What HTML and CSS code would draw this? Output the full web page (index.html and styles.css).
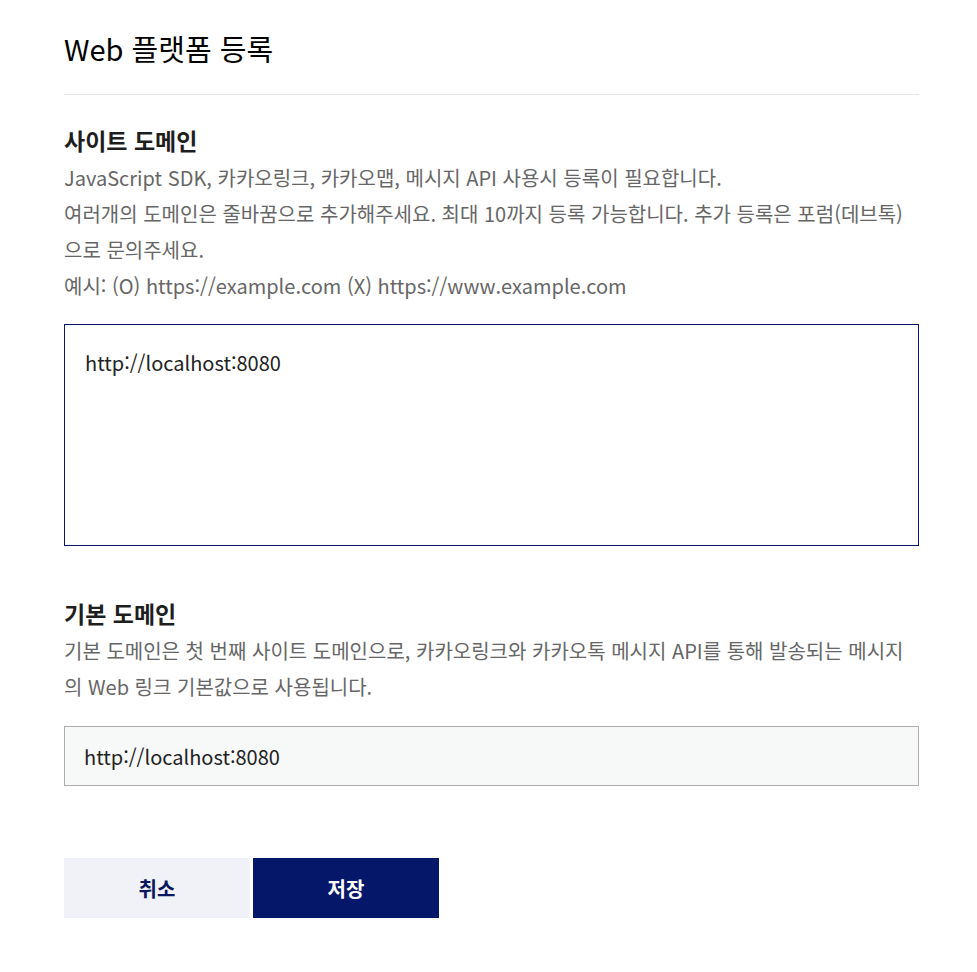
FILE: index.html
```html
<!DOCTYPE html>
<html lang="ko">
<head>
<meta charset="utf-8">
<title>Web 플랫폼 등록</title>
<link rel="stylesheet" href="styles.css">
</head>
<body>
<div class="page">
  <header class="page-header">
    <h1 class="page-title">Web 플랫폼 등록</h1>
  </header>

  <section class="field field-site">
    <h2 class="field-title">사이트 도메인</h2>
    <p class="field-desc">JavaScript SDK, 카카오링크, 카카오맵, 메시지 API 사용시 등록이 필요합니다.<br>여러개의 도메인은 줄바꿈으로 추가해주세요. 최대 10까지 등록 가능합니다. 추가 등록은 포럼(데브톡)으로 문의주세요.<br>예시: (O) https://example.com (X) https://www.example.com</p>
    <textarea class="domain-area" autofocus>http://localhost:8080</textarea>
  </section>

  <section class="field field-default">
    <h2 class="field-title">기본 도메인</h2>
    <p class="field-desc">기본 도메인은 첫 번째 사이트 도메인으로, 카카오링크와 카카오톡 메시지 API를 통해 발송되는 메시지의 Web 링크 기본값으로 사용됩니다.</p>
    <div class="domain-input">http://localhost:8080</div>
  </section>

  <div class="actions">
    <button class="btn btn-cancel" type="button">취소</button>
    <button class="btn btn-save" type="button">저장</button>
  </div>
</div>
</body>
</html>
```

FILE: styles.css
```css
* { box-sizing: border-box; }
html, body {
  margin: 0;
  padding: 0;
  background: #fff;
}
body {
  font-family: "Noto Sans CJK KR", "Noto Sans", sans-serif;
  color: #222;
}
.page {
  width: 855px;
  margin-left: 64px;
  padding-top: 28px;
}
.page-header {
  border-bottom: 1px solid #e6e6e6;
  padding-bottom: 26px;
}
.page-title {
  margin: 0;
  font-size: 29px;
  line-height: 40px;
  font-weight: 400;
  color: #000;
}
.field-site { margin-top: 30px; }
.field-default { margin-top: 52px; }
.field-title {
  margin: 0;
  font-size: 23px;
  line-height: 30px;
  font-weight: 700;
  color: #1e1e1e;
}
.field-desc {
  margin: 5px 0 0;
  font-size: 20px;
  line-height: 36px;
  color: #666;
}
.domain-area {
  display: block;
  width: 100%;
  height: 222px;
  margin-top: 20px;
  padding: 21px 20px;
  border: 1px solid #0a186b;
  border-radius: 0;
  outline: none;
  resize: none;
  font-family: inherit;
  font-size: 20px;
  line-height: 34px;
  color: #222;
  background: #fff;
  caret-color: #111;
}
.domain-input {
  margin-top: 21px;
  height: 60px;
  border: 1px solid #ababab;
  background: #f7f8f8;
  padding: 0 19px;
  display: flex;
  align-items: center;
  font-size: 20px;
  color: #222;
}
.actions {
  margin-top: 72px;
  display: flex;
  gap: 3px;
}
.btn {
  width: 186px;
  height: 60px;
  border: 0;
  border-radius: 0;
  font-family: inherit;
  font-size: 20px;
  font-weight: 700;
  cursor: pointer;
}
.btn-cancel {
  background: #f1f2f7;
  color: #0a1660;
}
.btn-save {
  background: #051769;
  color: #fff;
}
```
